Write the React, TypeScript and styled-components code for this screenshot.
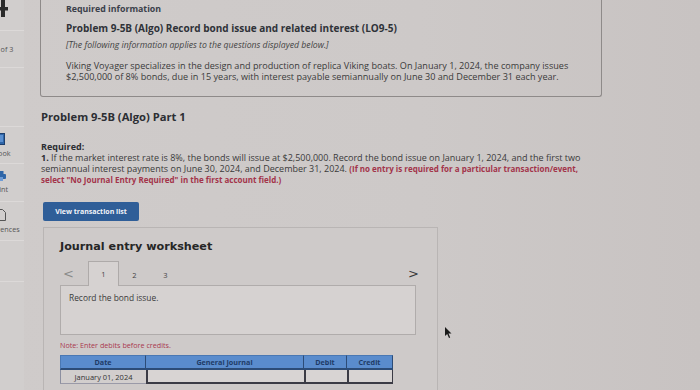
import styled, { createGlobalStyle } from "styled-components"

const GlobalStyle = createGlobalStyle`
  html, body {
    margin: 0;
    padding: 0;
    background: #ccc8c7;
  }
  body {
    font-family: "Open Sans", Lato, "Liberation Sans", sans-serif;
    color: #333;
  }
`

const Page = styled.div`
  position: relative;
  display: flex;
  width: 700px;
  height: 390px;
  overflow: hidden;
  background: linear-gradient(90deg, #cfcbca 0%, #cdc9c8 60%, #c8c3c2 100%);
`

// the left rail is only partly on screen: its centre sits at the page edge
const Sidebar = styled.nav`
  width: 24px;
  flex: none;
  overflow: hidden;
  background: #d1cecd;
`

const SideInner = styled.div`
  width: 48px;
  height: 100%;
  margin-left: -24px;
  display: flex;
  flex-direction: column;
`

const SideItem = styled.div<{ h: number; shift?: number }>`
  height: ${(p) => p.h}px;
  flex: none;
  display: flex;
  flex-direction: column;
  align-items: center;
  justify-content: center;
  gap: 3px;
  border-bottom: 1px solid #dcd9d8;
  transform: translateX(${(p) => p.shift ?? 0}px);
`

const SideLabel = styled.span`
  font-size: 7.2px;
  color: #555;
  white-space: nowrap;
`

const SideGap = styled.div<{ h: number }>`
  height: ${(p) => p.h}px;
  flex: none;
  border-bottom: 1px solid #dcd9d8;
`

const Main = styled.main`
  flex: none;
  width: 562px;
  padding-left: 16px;
  display: flex;
  flex-direction: column;
  & > * {
    flex-shrink: 0;
  }
`

const InfoBox = styled.section`
  height: 97px;
  box-sizing: border-box;
  border: 1px solid #8e8a89;
  border-top: none;
  border-radius: 0 0 3px 3px;
  padding: 3px 20px 0 25px;
`

const InfoLabel = styled.div`
  font-size: 8.8px;
  font-weight: 700;
  color: #3b3f4a;
  line-height: 12px;
`

const InfoTitle = styled.h1`
  margin: 7px 0 0;
  font-size: 10px;
  font-weight: 700;
  color: #2f3238;
  line-height: 12px;
  white-space: nowrap;
`

const InfoNote = styled.p`
  margin: 6px 0 0;
  font-size: 8.7px;
  font-style: italic;
  color: #444;
  line-height: 11px;
`

const InfoText = styled.p`
  margin: 10px 0 0;
  font-size: 9.1px;
  color: #3a3a3a;
  line-height: 10.5px;
  white-space: nowrap;
`

const PartTitle = styled.h2`
  margin: 13px 0 0 1px;
  font-size: 11.2px;
  font-weight: 700;
  color: #2c2e33;
  line-height: 14px;
`

const Required = styled.div`
  margin: 17px 0 0 1px;
  font-size: 9px;
  line-height: 11px;
  color: #3a3a3a;
  white-space: nowrap;
`

const Strong = styled.b`
  font-weight: 700;
  color: #2c2e33;
`

const Warn = styled.b`
  font-weight: 700;
  font-size: 8px;
  color: #a3344a;
`

const ActionButton = styled.button`
  align-self: flex-start;
  margin: 17px 0 0 3px;
  width: 96px;
  height: 19px;
  border: none;
  border-radius: 2px;
  background: #2f5e98;
  color: #f2f4f8;
  font-family: inherit;
  font-size: 7px;
  font-weight: 700;
  padding: 0;
`

const Worksheet = styled.section`
  margin: 6px 0 0 3px;
  width: 395px;
  height: 180px;
  box-sizing: border-box;
  border: 1px solid #b9b5b4;
  background: #cecac9;
  padding: 12px 21px 0 16px;
`

const WsTitle = styled.h3`
  margin: 0;
  font-family: "DejaVu Sans", Verdana, sans-serif;
  font-size: 11.2px;
  font-weight: 700;
  color: #262626;
  line-height: 14px;
`

const TabRow = styled.div`
  display: flex;
  align-items: flex-end;
  height: 25px;
  margin-top: 6px;
  padding-left: 3px;
`

const Arrow = styled.span<{ right?: boolean }>`
  align-self: center;
  font-size: 13px;
  color: ${(p) => (p.right ? "#3a3a3a" : "#8a8a8a")};
  font-family: "DejaVu Sans", sans-serif;
  margin-left: ${(p) => (p.right ? "auto" : "0")};
  margin-right: ${(p) => (p.right ? "-3px" : "14px")};
  padding-top: 2px;
`

const Tab = styled.div<{ active?: boolean }>`
  width: 31px;
  box-sizing: border-box;
  display: flex;
  align-items: center;
  justify-content: center;
  font-size: 7.5px;
  color: #444;
  position: relative;
  z-index: 1;
  margin-bottom: -1px;
  border: ${(p) => (p.active ? "1px solid #aeaaa9" : "1px solid transparent")};
  border-bottom: none;
  background: ${(p) => (p.active ? "#d6d2d1" : "transparent")};
  height: ${(p) => (p.active ? "25px" : "24px")};
`

const RecordBox = styled.div`
  height: 50px;
  box-sizing: border-box;
  border: 1px solid #b0acab;
  background: #d6d2d1;
  padding: 6px 8px;
  font-size: 8.4px;
  color: #3a3a3a;
`

const Note = styled.div`
  margin-top: 5px;
  font-size: 7.2px;
  color: #a9384e;
`

const Table = styled.div`
  margin-top: 5px;
  width: 333px;
  display: grid;
  grid-template-columns: 86px 158px 43px 46px;
`

const Th = styled.div`
  height: 15px;
  box-sizing: border-box;
  display: flex;
  align-items: center;
  justify-content: center;
  background: #5a8ccd;
  border-top: 1px solid #4a78b3;
  border-right: 1px solid #2c4c77;
  border-bottom: 2px solid #2c4c77;
  font-size: 7.2px;
  font-weight: 700;
  color: #1f3b66;
  &:first-child {
    border-left: 1px solid #4a78b3;
  }
`

const Td = styled.div<{ input?: boolean }>`
  height: 14px;
  box-sizing: border-box;
  display: flex;
  align-items: center;
  justify-content: center;
  font-size: 7.5px;
  color: #333;
  background: ${(p) => (p.input ? "#d8d4d3" : "#d2cecd")};
  border-left: ${(p) => (p.input ? "2px solid #3b3b45" : "1px solid #8c8fa0")};
  border-bottom: ${(p) => (p.input ? "2px solid #3b3b45" : "1px solid #9a9aa8")};
  &:last-child {
    border-right: 1px solid #3b3b45;
  }
`

const Cursor = styled.svg`
  position: absolute;
  left: 445px;
  top: 327px;
`

const BookIcon = () => (
  <svg width="9" height="12" viewBox="0 0 9 12">
    <rect x="0.5" y="0.5" width="8" height="11" fill="#2f66a8" stroke="#1e3f6d" />
    <rect x="2" y="2" width="5" height="7" fill="#5a8fd0" />
  </svg>
)

const PrintIcon = () => (
  <svg width="11" height="10" viewBox="0 0 11 10">
    <rect x="2.5" y="0" width="6" height="3" fill="#2f66a8" />
    <rect x="0" y="3" width="11" height="5" rx="1" fill="#2f66a8" />
    <rect x="3" y="6" width="5" height="4" fill="#6d9bd6" />
  </svg>
)

const DocIcon = () => (
  <svg width="10" height="12" viewBox="0 0 10 12">
    <path d="M0.5 0.5 H6.5 L9.5 3.5 V11.5 H0.5 Z" fill="none" stroke="#555" />
  </svg>
)

const PlusIcon = () => (
  <svg width="12" height="20" viewBox="0 0 12 20">
    <rect x="5" y="0" width="4" height="17" fill="#2a2a2a" />
    <rect x="0" y="7" width="12" height="3.5" fill="#2a2a2a" />
  </svg>
)

export default function App() {
  return (
    <>
      <GlobalStyle />
      <Page>
        <Sidebar>
          <SideInner>
            <SideItem h={30} shift={2} style={{ justifyContent: "flex-start" }}>
              <PlusIcon />
            </SideItem>
            <SideItem h={36} shift={4}>
              <SideLabel>2 of 3</SideLabel>
            </SideItem>
            <SideGap h={58} />
            <SideItem h={36}>
              <BookIcon />
              <SideLabel>eBook</SideLabel>
            </SideItem>
            <SideItem h={37}>
              <PrintIcon />
              <SideLabel>Print</SideLabel>
            </SideItem>
            <SideItem h={38} shift={1}>
              <DocIcon />
              <SideLabel>References</SideLabel>
            </SideItem>
            <SideGap h={40} />
          </SideInner>
        </Sidebar>

        <Main>
          <InfoBox>
            <InfoLabel>Required information</InfoLabel>
            <InfoTitle>Problem 9-5B (Algo) Record bond issue and related interest (LO9-5)</InfoTitle>
            <InfoNote>[The following information applies to the questions displayed below.]</InfoNote>
            <InfoText>
              Viking Voyager specializes in the design and production of replica Viking boats. On January 1, 2024, the company issues
              <br />
              $2,500,000 of 8% bonds, due in 15 years, with interest payable semiannually on June 30 and December 31 each year.
            </InfoText>
          </InfoBox>

          <PartTitle>Problem 9-5B (Algo) Part 1</PartTitle>

          <Required>
            <Strong>Required:</Strong>
            <br />
            <Strong>1.</Strong> If the market interest rate is 8%, the bonds will issue at $2,500,000. Record the bond issue on January 1, 2024, and the first two
            <br />
            semiannual interest payments on June 30, 2024, and December 31, 2024.{" "}
            <Warn>(If no entry is required for a particular transaction/event,</Warn>
            <br />
            <Warn>select "No Journal Entry Required" in the first account field.)</Warn>
          </Required>

          <ActionButton>View transaction list</ActionButton>

          <Worksheet>
            <WsTitle>Journal entry worksheet</WsTitle>
            <TabRow>
              <Arrow>&lt;</Arrow>
              <Tab active>1</Tab>
              <Tab>2</Tab>
              <Tab>3</Tab>
              <Arrow right>&gt;</Arrow>
            </TabRow>
            <RecordBox>Record the bond issue.</RecordBox>
            <Note>Note: Enter debits before credits.</Note>
            <Table>
              <Th>Date</Th>
              <Th>General Journal</Th>
              <Th>Debit</Th>
              <Th>Credit</Th>
              <Td>January 01, 2024</Td>
              <Td input />
              <Td input />
              <Td input />
            </Table>
          </Worksheet>
        </Main>

        <Cursor width="8" height="12" viewBox="0 0 8 12">
          <path d="M0 0 L0 9 L2.2 7 L4 11 L5.2 10.4 L3.5 6.6 L6.5 6.6 Z" fill="#1a1a1a" />
        </Cursor>
      </Page>
    </>
  )
}
